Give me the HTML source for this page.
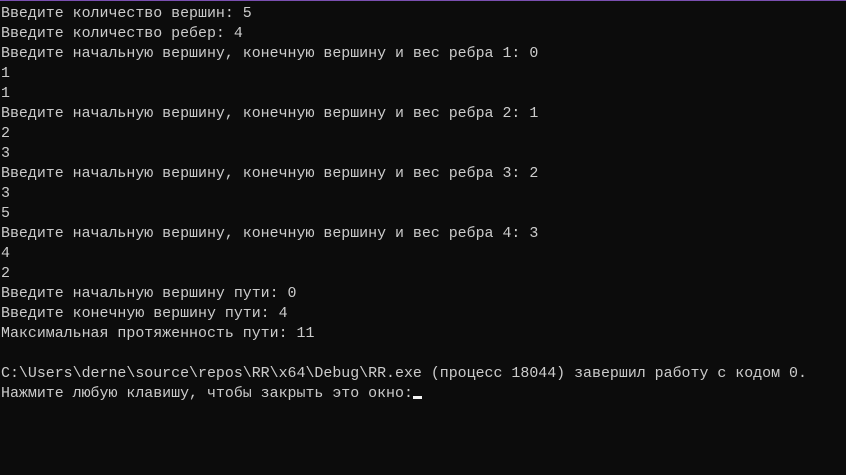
<!DOCTYPE html>
<html><head><meta charset="utf-8"><style>
html,body{margin:0;padding:0;background:#0c0c0c;width:846px;height:475px;overflow:hidden}
body{border-top:1px solid #7a4fb0;box-sizing:border-box}
pre{margin:0;padding:0 0 0 1px;color:#cccccc;font-family:"Liberation Mono","DejaVu Sans Mono",monospace;font-size:14.93px;line-height:20px;position:relative;top:3px}
.c{display:inline-block;width:9px;height:3px;background:#f2f2f2;vertical-align:-2px}
</style></head><body><pre>Введите количество вершин: 5
Введите количество ребер: 4
Введите начальную вершину, конечную вершину и вес ребра 1: 0
1
1
Введите начальную вершину, конечную вершину и вес ребра 2: 1
2
3
Введите начальную вершину, конечную вершину и вес ребра 3: 2
3
5
Введите начальную вершину, конечную вершину и вес ребра 4: 3
4
2
Введите начальную вершину пути: 0
Введите конечную вершину пути: 4
Максимальная протяженность пути: 11

C:\Users\derne\source\repos\RR\x64\Debug\RR.exe (процесс 18044) завершил работу с кодом 0.
Нажмите любую клавишу, чтобы закрыть это окно:<span class="c"></span></pre></body></html>
